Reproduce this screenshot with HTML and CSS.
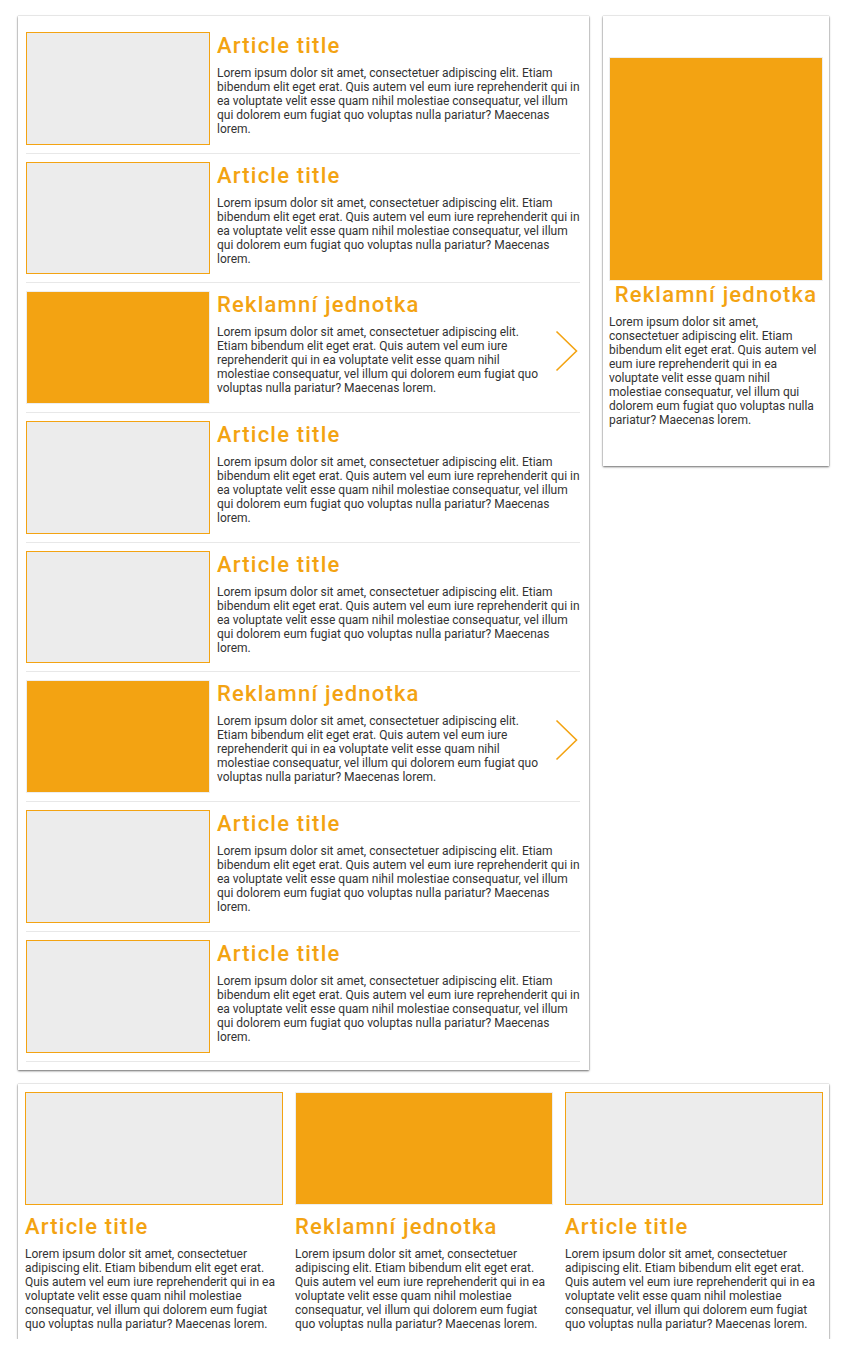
FILE: index.html
```html
<!DOCTYPE html>
<html lang="cs">
<head>
<meta charset="utf-8">
<title>Articles</title>
<link rel="stylesheet" href="styles.css">
</head>
<body>
<div class="page">
  <div class="top">
    <main class="box list">
      <article class="row">
        <div class="thumb"></div>
        <div class="content">
          <h2 class="title">Article title</h2>
          <p class="text">Lorem ipsum dolor sit amet, consectetuer adipiscing elit. Etiam bibendum elit eget erat. Quis autem vel eum iure reprehenderit qui in ea voluptate velit esse quam nihil molestiae consequatur, vel illum qui dolorem eum fugiat quo voluptas nulla pariatur? Maecenas lorem.</p>
        </div>
      </article>
      <article class="row">
        <div class="thumb"></div>
        <div class="content">
          <h2 class="title">Article title</h2>
          <p class="text">Lorem ipsum dolor sit amet, consectetuer adipiscing elit. Etiam bibendum elit eget erat. Quis autem vel eum iure reprehenderit qui in ea voluptate velit esse quam nihil molestiae consequatur, vel illum qui dolorem eum fugiat quo voluptas nulla pariatur? Maecenas lorem.</p>
        </div>
      </article>
      <article class="row ad">
        <div class="thumb thumb-ad"></div>
        <div class="content">
          <h2 class="title">Reklamní jednotka</h2>
          <p class="text">Lorem ipsum dolor sit amet, consectetuer adipiscing elit. Etiam bibendum elit eget erat. Quis autem vel eum iure reprehenderit qui in ea voluptate velit esse quam nihil molestiae consequatur, vel illum qui dolorem eum fugiat quo voluptas nulla pariatur? Maecenas lorem.</p>
        </div>
        <div class="arrow">
          <svg width="24" height="42" viewBox="0 0 24 42"><polyline points="1.5,1.5 21.5,21 1.5,40.5" fill="none" stroke="#f3a312" stroke-width="1.6"/></svg>
        </div>
      </article>
      <article class="row">
        <div class="thumb"></div>
        <div class="content">
          <h2 class="title">Article title</h2>
          <p class="text">Lorem ipsum dolor sit amet, consectetuer adipiscing elit. Etiam bibendum elit eget erat. Quis autem vel eum iure reprehenderit qui in ea voluptate velit esse quam nihil molestiae consequatur, vel illum qui dolorem eum fugiat quo voluptas nulla pariatur? Maecenas lorem.</p>
        </div>
      </article>
      <article class="row">
        <div class="thumb"></div>
        <div class="content">
          <h2 class="title">Article title</h2>
          <p class="text">Lorem ipsum dolor sit amet, consectetuer adipiscing elit. Etiam bibendum elit eget erat. Quis autem vel eum iure reprehenderit qui in ea voluptate velit esse quam nihil molestiae consequatur, vel illum qui dolorem eum fugiat quo voluptas nulla pariatur? Maecenas lorem.</p>
        </div>
      </article>
      <article class="row ad">
        <div class="thumb thumb-ad"></div>
        <div class="content">
          <h2 class="title">Reklamní jednotka</h2>
          <p class="text">Lorem ipsum dolor sit amet, consectetuer adipiscing elit. Etiam bibendum elit eget erat. Quis autem vel eum iure reprehenderit qui in ea voluptate velit esse quam nihil molestiae consequatur, vel illum qui dolorem eum fugiat quo voluptas nulla pariatur? Maecenas lorem.</p>
        </div>
        <div class="arrow">
          <svg width="24" height="42" viewBox="0 0 24 42"><polyline points="1.5,1.5 21.5,21 1.5,40.5" fill="none" stroke="#f3a312" stroke-width="1.6"/></svg>
        </div>
      </article>
      <article class="row">
        <div class="thumb"></div>
        <div class="content">
          <h2 class="title">Article title</h2>
          <p class="text">Lorem ipsum dolor sit amet, consectetuer adipiscing elit. Etiam bibendum elit eget erat. Quis autem vel eum iure reprehenderit qui in ea voluptate velit esse quam nihil molestiae consequatur, vel illum qui dolorem eum fugiat quo voluptas nulla pariatur? Maecenas lorem.</p>
        </div>
      </article>
      <article class="row">
        <div class="thumb"></div>
        <div class="content">
          <h2 class="title">Article title</h2>
          <p class="text">Lorem ipsum dolor sit amet, consectetuer adipiscing elit. Etiam bibendum elit eget erat. Quis autem vel eum iure reprehenderit qui in ea voluptate velit esse quam nihil molestiae consequatur, vel illum qui dolorem eum fugiat quo voluptas nulla pariatur? Maecenas lorem.</p>
        </div>
      </article>
    </main>
    <aside class="box side">
      <div class="side-img"></div>
      <h2 class="title side-title">Reklamní jednotka</h2>
      <p class="text">Lorem ipsum dolor sit amet, consectetuer adipiscing elit. Etiam bibendum elit eget erat. Quis autem vel eum iure reprehenderit qui in ea voluptate velit esse quam nihil molestiae consequatur, vel illum qui dolorem eum fugiat quo voluptas nulla pariatur? Maecenas lorem.</p>
    </aside>
  </div>
  <section class="box cards">
    <article class="card">
      <div class="card-img"></div>
      <h2 class="title card-title">Article title</h2>
      <p class="text">Lorem ipsum dolor sit amet, consectetuer adipiscing elit. Etiam bibendum elit eget erat. Quis autem vel eum iure reprehenderit qui in ea voluptate velit esse quam nihil molestiae consequatur, vel illum qui dolorem eum fugiat quo voluptas nulla pariatur? Maecenas lorem.</p>
    </article>
    <article class="card">
      <div class="card-img card-img-ad"></div>
      <h2 class="title card-title">Reklamní jednotka</h2>
      <p class="text">Lorem ipsum dolor sit amet, consectetuer adipiscing elit. Etiam bibendum elit eget erat. Quis autem vel eum iure reprehenderit qui in ea voluptate velit esse quam nihil molestiae consequatur, vel illum qui dolorem eum fugiat quo voluptas nulla pariatur? Maecenas lorem.</p>
    </article>
    <article class="card">
      <div class="card-img"></div>
      <h2 class="title card-title">Article title</h2>
      <p class="text">Lorem ipsum dolor sit amet, consectetuer adipiscing elit. Etiam bibendum elit eget erat. Quis autem vel eum iure reprehenderit qui in ea voluptate velit esse quam nihil molestiae consequatur, vel illum qui dolorem eum fugiat quo voluptas nulla pariatur? Maecenas lorem.</p>
    </article>
  </section>
</div>
</body>
</html>
```

FILE: styles.css
```css
* { box-sizing: border-box; }
html, body { margin: 0; padding: 0; background: #fff; }
body {
  font-family: Roboto, "Liberation Sans", Arial, sans-serif;
  color: #333;
}
.page {
  width: 844px;
  padding: 16px 15px 0 18px;
}
.top {
  display: flex;
  align-items: flex-start;
  gap: 14px;
}
.box {
  background: #fff;
  box-shadow: 0 1px 2px rgba(0, 0, 0, 0.55), 0 0 1px rgba(0, 0, 0, 0.35);
}
.list {
  width: 571px;
  padding: 8px 9px 8px 8px;
}
.row {
  display: flex;
  padding: 8px 0;
  border-bottom: 1px solid #e8e8e8;
}
.thumb {
  flex: 0 0 184px;
  height: 112.7px;
  background: #ececec;
  border: 1px solid #f3a312;
}
.thumb-ad {
  background: #f3a312;
  border-color: #eeeeee;
}
.content {
  flex: 1;
  padding-left: 7px;
  padding-top: 1px;
  min-width: 0;
}
.title {
  margin: 0 0 7px;
  font-size: 22px;
  line-height: 26px;
  font-weight: 500;
  color: #f3a312;
  letter-spacing: 1.2px;
}
.text {
  margin: 0;
  font-size: 12px;
  line-height: 14px;
  color: #333;
}
.ad .content {
  padding-right: 4px;
}
.arrow {
  flex: 0 0 32px;
  display: flex;
  align-items: center;
  justify-content: flex-end;
  padding-right: 1px;
  padding-top: 7px;
}
.arrow svg { display: block; }
.side {
  width: 226px;
  padding: 41px 6px 39px;
}
.side-img {
  height: 224px;
  background: #f3a312;
  border: 1px solid #eeeeee;
}
.side-title {
  text-align: center;
  margin-top: 1px;
}
.cards {
  margin-top: 14px;
  width: 811px;
  display: grid;
  grid-template-columns: 1fr 1fr 1fr;
  column-gap: 12px;
  padding: 8px 6px 8px 7px;
}
.card-img {
  height: 113px;
  background: #ececec;
  border: 1px solid #f3a312;
}
.card-img-ad {
  background: #f3a312;
  border-color: #eeeeee;
}
.card-title {
  margin-top: 9px;
}
```
